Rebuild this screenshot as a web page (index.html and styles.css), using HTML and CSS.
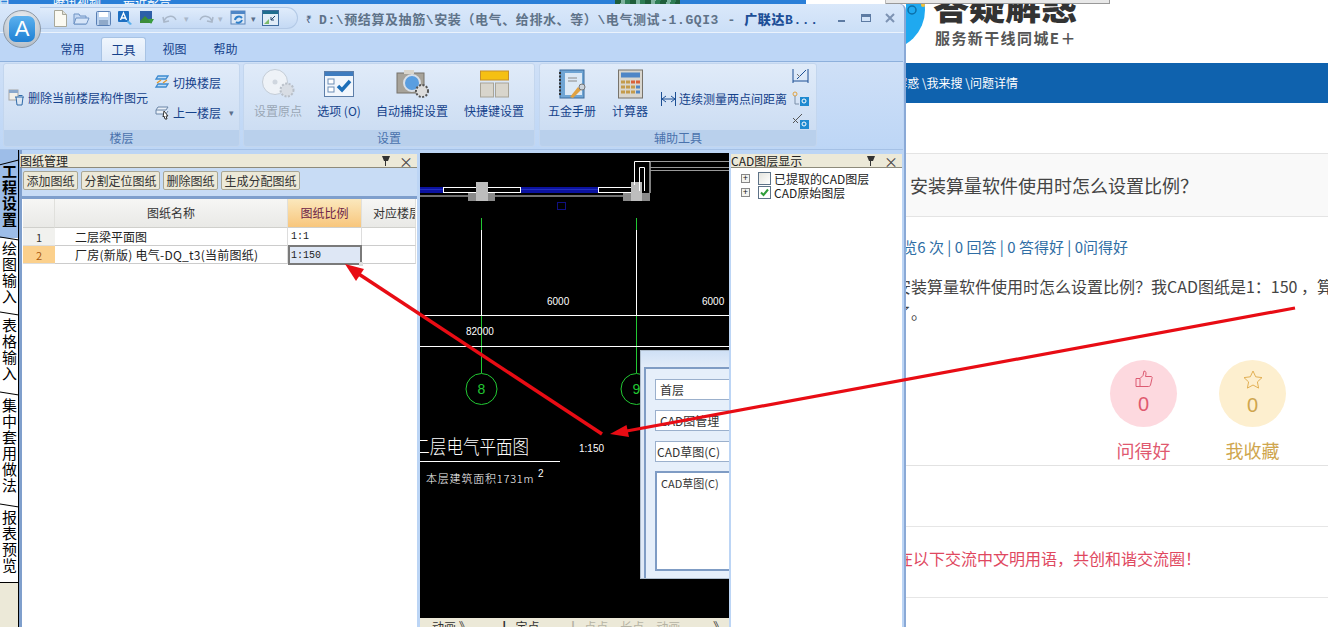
FILE: index.html
```html
<!DOCTYPE html>
<html lang="zh">
<head>
<meta charset="utf-8">
<title>安装算量软件使用时怎么设置比例</title>
<link rel="stylesheet" href="styles.css">
</head>
<body>
<div class="desk">

  <main class="web">
    <div class="topstrip">
      <div class="taskbar"><span class="tb1">计算</span><span class="tb2">腾讯视频</span><span class="tb3">最近影音</span><i class="plant"></i></div>
      <div class="topgap"></div>
      <div class="topgrey"></div>
    </div>
    <header class="logo">
      <svg class="logomark" width="24" height="50" viewBox="0 0 24 50"><circle cx="-21" cy="10" r="40" fill="#1fa9f0"/><circle cx="6" cy="10" r="4" fill="none" stroke="#0c6fa8" stroke-width="1.500"/><circle cx="17" cy="5" r="2" fill="#f1c13b"/></svg>
      <div class="logotext">
        <div class="logotitle">答疑解惑</div>
        <div class="logosub">服务新干线同城E＋</div>
      </div>
    </header>
    <nav class="crumbs"><span class="crumbtext">答疑解惑 \我来搜 \问题详情</span></nav>
    <div class="spacer50"></div>
    <h1 class="qtitle">安装算量软件使用时怎么设置比例？</h1>
    <div class="meta">浏览6 次 | 0 回答 | 0 答得好 | 0问得好</div>
    <div class="qbody">安装算量软件使用时怎么设置比例？我CAD图纸是1：150 ，算量时比例怎么设置，谢谢<br>了。</div>
    <div class="votes">
      <div class="vote vote-red">
        <div class="disc disc-red">
          <svg width="18" height="18" viewBox="0 0 18 18" fill="none" stroke="#dc5b72" stroke-width="1"><path d="M1 8.500h4v8H1zM5 8.500l3-3 1-4.500c2 0 2.500 2 1.500 5.500H16c1 0 1.500 1 1 2l-1.500 6.500c-.2.800-.8 1.500-1.800 1.500H5"/></svg>
          <span class="count">0</span>
        </div>
        <div class="votelabel">问得好</div>
      </div>
      <div class="vote vote-gold">
        <div class="disc disc-gold">
          <svg width="20" height="19" viewBox="0 0 20 19" fill="none" stroke="#e2b055" stroke-width="1"><path d="M10 1l2.700 5.800 6.300.8-4.600 4.300 1.200 6.200L10 15l-5.600 3.100 1.200-6.200L1 7.600l6.300-.8z"/></svg>
          <span class="count">0</span>
        </div>
        <div class="votelabel">我收藏</div>
      </div>
    </div>
    <div class="band61"></div>
    <div class="notice"><span class="noticetext">请在以下交流中文明用语，共创和谐交流圈！</span></div>
  </main>

  <section class="app">
    <div class="orb"><span class="orbcore">A</span></div>

    <div class="titlebar">
      <div class="qat">
        <svg width="14" height="17" viewBox="0 0 14 17"><path d="M1.500.5h8l4 4v12h-12z" fill="#fbfaf2" stroke="#a8a89a"/><path d="M9.500.5v4h4" fill="#e0e0d8" stroke="#a8a89a"/></svg>
        <svg width="17" height="15" viewBox="0 0 17 15"><path d="M1 13V3h5l1 2h6v8z" fill="#c4d8f3" stroke="#6f93c4"/><path d="M1 13l2-6h13l-2.500 6z" fill="#d6e5f8" stroke="#6f93c4"/></svg>
        <svg width="15" height="15" viewBox="0 0 15 15"><rect x=".5" y=".5" width="14" height="14" rx="1" fill="#bcd3ef" stroke="#587fb5"/><rect x="3" y="1" width="9" height="5" fill="#fff"/><rect x="3" y="9" width="9" height="5" fill="#8fa9c9"/></svg>
        <svg width="16" height="16" viewBox="0 0 16 16"><rect x="1" y="1" width="11" height="11" rx="1" fill="#1d6fc2"/><path d="M3.500 10L6.500 3l3 7M4.500 8h4" fill="none" stroke="#fff" stroke-width="1.300"/><path d="M11 10l4 4-2 1-3-3z" fill="#5ab0ec"/></svg>
        <svg width="16" height="16" viewBox="0 0 16 16"><rect x="1" y="1" width="12" height="12" fill="#2d5fa8"/><path d="M1 11l5-5 4 4 3-2v5H1z" fill="#3c8c3a"/><path d="M9 9h6l-3 5z" fill="#3a9d3f"/></svg>
        <svg class="dim" width="20" height="12" viewBox="0 0 20 12" fill="none" stroke="#a9b7c9" stroke-width="1.500"><path d="M3 10c1-6 9-8 12-2M2 5l1 5 5-1"/></svg>
        <span class="drop dimtext">▾</span>
        <svg class="dim" width="20" height="12" viewBox="0 0 20 12" fill="none" stroke="#a9b7c9" stroke-width="1.500"><path d="M17 10c-1-6-9-8-12-2M18 5l-1 5-5-1"/></svg>
        <span class="drop dimtext">▾</span>
        <svg width="19" height="17" viewBox="0 0 19 17"><rect x="2" y="1" width="14" height="13" fill="#dce8f6" stroke="#5d86bb"/><rect x="2" y="1" width="14" height="3" fill="#4f86c6"/><path d="M6 10a4 4 0 0 1 7-2M13 10a4 4 0 0 1-6 2" fill="none" stroke="#2f7fc9" stroke-width="2"/></svg>
        <span class="drop">▾</span>
        <svg width="17" height="16" viewBox="0 0 17 16"><rect x=".5" y=".5" width="16" height="15" fill="#e0ecf8" stroke="#3f6c9e"/><rect x="1" y="1" width="15" height="3" fill="#1f6d8e"/><path d="M2 14l5-5v5z" fill="#7ebb6b"/><path d="M13 6l-4 4M9 7v3h3" fill="none" stroke="#25466e"/></svg>
      </div>
      <span class="qatmenu">₹</span>
      <div class="doctitle">D:\预结算及抽筋\安装（电气、给排水、等）\电气测试-1.GQI3 - <b class="appname">广联达B...</b></div>
      <div class="winbtns">
        <svg width="10" height="10" viewBox="0 0 10 10"><rect x="1" y="7" width="7" height="2" fill="#5d7ba3"/></svg>
        <svg width="10" height="10" viewBox="0 0 10 10"><rect x=".5" y="1.500" width="9" height="7" fill="none" stroke="#5d7ba3"/><rect x="1" y="2" width="8" height="2" fill="#5d7ba3"/></svg>
        <svg width="10" height="10" viewBox="0 0 10 10"><path d="M1 1l8 8M9 1L1 9" stroke="#7d93b3" stroke-width="2"/></svg>
      </div>
    </div>

    <div class="tabs">
      <span class="tab">常用</span>
      <span class="tab tab-on">工具</span>
      <span class="tab">视图</span>
      <span class="tab">帮助</span>
    </div>

    <div class="ribbon">
      <div class="group g1">
        <div class="gbody">
          <div class="rowbtn wide">
            <svg width="17" height="17" viewBox="0 0 17 17"><rect x="1" y="1" width="9" height="10" fill="#f2f0ea" stroke="#a5a5a5"/><rect x="1" y="1" width="9" height="3" fill="#8aa8cc"/><path d="M7 8h9M8 8l1 8h5l1-8M10.500 6.500h4" fill="#dce6f2" stroke="#2f6aa8"/></svg>
            <span>删除当前楼层构件图元</span>
          </div>
          <div class="stack">
            <div class="rowbtn">
              <svg width="16" height="16" viewBox="0 0 16 16" fill="none" stroke="#3d8ad0" stroke-width="1.300"><path d="M4 2h10l-2 3H2zM4 10h10l-2 3H2z" fill="#bfdcf5"/><path d="M13 6L9 9M3 9l4-3" stroke="#e29a2e"/></svg>
              <span>切换楼层</span>
            </div>
            <div class="rowbtn">
              <svg width="16" height="16" viewBox="0 0 16 16" fill="none" stroke="#6b85a6"><path d="M4 3h10l-2 3H2zM2 6v4h10l2-3" fill="#e8eff8"/><path d="M10 7l4 5-2 0 1 3-2 0-1-3-1 1z" fill="#fff" stroke="#333"/></svg>
              <span>上一楼层</span><span class="drop pad">▾</span>
            </div>
          </div>
        </div>
        <div class="glabel">楼层</div>
      </div>

      <div class="group g2">
        <div class="gbody gbig">
          <div class="big b-origin">
            <svg width="36" height="30" viewBox="0 0 36 30"><circle cx="15" cy="13" r="12.500" fill="#eef2f7" stroke="#c3ccd6"/><circle cx="15" cy="13" r="2.500" fill="#cfd6df"/><circle cx="27" cy="21" r="6.500" fill="#d8dde4" stroke="#b8bfc8" stroke-width="2" stroke-dasharray="2 1.500"/></svg>
            <span class="off">设置原点</span>
          </div>
          <div class="big b-opt">
            <svg width="30" height="26" viewBox="0 0 30 26"><rect x=".5" y=".5" width="29" height="25" fill="#f1f6fc" stroke="#5d7ea8"/><rect x="1" y="1" width="28" height="4" fill="#3f7cbf"/><rect x="4" y="8" width="6" height="5" fill="#fff" stroke="#6d8db5"/><rect x="4" y="16" width="6" height="5" fill="#fff" stroke="#6d8db5"/><path d="M14 15l4 4 8-9" fill="none" stroke="#1e6fb8" stroke-width="3.500"/></svg>
            <span>选项 (O)</span>
          </div>
          <div class="big b-snap">
            <svg width="33" height="30" viewBox="0 0 33 30"><rect x="1" y="4" width="27" height="20" fill="#a7a39a" stroke="#77736b"/><rect x="8" y="1" width="10" height="4" fill="#d9d5cc"/><circle cx="16" cy="14" r="8" fill="#5a9ee0" stroke="#d8dfe8" stroke-width="2"/><circle cx="26" cy="22" r="6" fill="#ddd" stroke="#555" stroke-width="2" stroke-dasharray="2 1.500"/></svg>
            <span>自动捕捉设置</span>
          </div>
          <div class="big b-key">
            <svg width="29" height="27" viewBox="0 0 29 27"><rect x=".5" y=".5" width="28" height="9" fill="#f5c013" stroke="#c7902a"/><rect x=".5" y="12.500" width="13" height="14" fill="#d8d5cc" stroke="#a8a498"/><rect x="15.500" y="12.500" width="13" height="14" fill="#d8d5cc" stroke="#a8a498"/></svg>
            <span>快捷键设置</span>
          </div>
        </div>
        <div class="glabel">设置</div>
      </div>

      <div class="group g3">
        <div class="gbody gbig">
          <div class="big b-hand">
            <svg width="30" height="30" viewBox="0 0 30 30"><rect x="3" y="1" width="24" height="28" fill="#6fa5d4" stroke="#3c6d9e"/><rect x="8" y="4" width="17" height="22" fill="#dbe9f6"/><path d="M3 3v24" stroke="#333" stroke-width="2" stroke-dasharray="2 1.500"/><path d="M11 9h9M11 12h9" stroke="#888"/><path d="M13 28l8-10 3 3-8 8z" fill="#e0a241"/><circle cx="25" cy="18" r="3" fill="#ccd4dc" stroke="#777"/></svg>
            <span>五金手册</span>
          </div>
          <div class="big b-calc">
            <svg width="25" height="29" viewBox="0 0 25 29"><rect x=".5" y=".5" width="24" height="28" fill="#d9d6cf" stroke="#77736b"/><rect x="3" y="3" width="19" height="5" fill="#4f86c6"/><g fill="#c49b4c"><rect x="3" y="11" width="4" height="3"/><rect x="8" y="11" width="4" height="3"/><rect x="13" y="11" width="4" height="3" fill="#d9613a"/><rect x="18" y="11" width="4" height="3" fill="#d9613a"/><rect x="3" y="16" width="4" height="3"/><rect x="8" y="16" width="4" height="3"/><rect x="13" y="16" width="4" height="3"/><rect x="18" y="16" width="4" height="3" fill="#4f86c6"/><rect x="3" y="21" width="4" height="3"/><rect x="8" y="21" width="4" height="3"/><rect x="13" y="21" width="4" height="3"/><rect x="18" y="21" width="4" height="3" fill="#4f86c6"/></g></svg>
            <span>计算器</span>
          </div>
          <div class="rowbtn measure">
            <svg width="17" height="16" viewBox="0 0 17 16" fill="none" stroke="#1c4f94"><path d="M1.500 1v14M15.500 1v14M2 8h13M2 8l4-3M2 8l4 3M15 8l-4-3M15 8l-4 3"/></svg>
            <span>连续测量两点间距离</span>
          </div>
          <div class="minis">
            <svg width="17" height="17" viewBox="0 0 17 17" fill="none" stroke="#1c4f94"><path d="M1 2v14M16 2v14M1 14h15M5 12l9-9" /><path d="M5 7l3 3" stroke="#777"/></svg>
            <svg width="17" height="17" viewBox="0 0 17 17" fill="none"><circle cx="3" cy="4" r="2" stroke="#e0a241"/><path d="M3 6v8h4" stroke="#7a8fa8"/><rect x="8" y="7" width="9" height="9" fill="#1f8ad0"/><circle cx="12" cy="11" r="2" stroke="#fff"/></svg>
            <svg width="17" height="17" viewBox="0 0 17 17" fill="none"><path d="M1 10l9-9M1 5l5 5" stroke="#555"/><rect x="8" y="7" width="9" height="9" fill="#1f8ad0"/><circle cx="12" cy="11" r="2" stroke="#fff"/></svg>
          </div>
        </div>
        <div class="glabel">辅助工具</div>
      </div>
    </div>

    <div class="dock">
      <div class="sidetabs">
        <div class="stab stab-on">工程设置</div>
        <div class="stab st2">绘图输入</div>
        <div class="stab st3">表格输入</div>
        <div class="stab st4">集中套用做法</div>
        <div class="stab st5">报表预览</div>
        <div class="sidefill"></div>
      </div>

      <div class="panel drawings">
        <div class="ptitle"><span>图纸管理</span><span class="pctl"><i class="pin"></i><i class="close">×</i></span></div>
        <div class="toolbar">
          <button class="tbtn">添加图纸</button>
          <button class="tbtn">分割定位图纸</button>
          <button class="tbtn">删除图纸</button>
          <button class="tbtn">生成分配图纸</button>
        </div>
        <div class="sheet">
          <div class="hd corner"></div>
          <div class="hd">图纸名称</div>
          <div class="hd hd-on">图纸比例</div>
          <div class="hd hd-cut">对应楼层</div>

          <div class="num">1</div>
          <div class="cell name">二层梁平面图</div>
          <div class="cell mono">1:1</div>
          <div class="cell"></div>

          <div class="num num-on">2</div>
          <div class="cell name namewide">厂房(新版) 电气-DQ_t3(当前图纸)</div>
          <div class="cell mono cell-on">1:150</div>
          <div class="cell"></div>
        </div>
      </div>

      <div class="cadwrap">
        <div class="cad">
          <svg class="drawing" width="309" height="465" viewBox="0 0 309 465">
            <rect x="0" y="34" width="23" height="6" fill="#0b12a0"/>
            <rect x="101" y="34" width="77" height="6" fill="#0b12a0"/>
            <path d="M0 36.500h23M101 36.500h77" stroke="#2430c0"/>
            <rect x="23.500" y="34.500" width="77" height="5" fill="#000" stroke="#fff"/>
            <rect x="178.500" y="34.500" width="33" height="5" fill="#000" stroke="#fff"/>
            <path d="M0 43h48M75 43h128" stroke="#ddd"/>
            <rect x="48" y="40" width="27" height="8" fill="#8a8a8a"/>
            <rect x="56" y="29" width="12" height="19" fill="#bdbdbd"/>
            <rect x="203" y="40" width="27" height="8" fill="#8a8a8a"/>
            <rect x="211" y="29" width="11" height="19" fill="#bdbdbd"/>
            <path d="M214.500 32V8.500H230M230 8.500V40" fill="none" stroke="#fff"/>
            <path d="M219.500 38V14.500h5V38" fill="none" stroke="#fff"/>
            <path d="M230 8.500h79M230 14.500h79M230 17.500h79" stroke="#999"/>
            <rect x="137.500" y="49.500" width="8" height="7" fill="none" stroke="#101080"/>
            <path d="M61.500 65v12M216.500 65v12M61.500 162v58M216.500 162v58" stroke="#22c833"/>
            <path d="M61.500 77v85M216.500 77v85" stroke="#fff"/>
            <path d="M0 162.500h309M0 193.500h309" stroke="#fff"/>
            <text class="dim6" x="127" y="152">6000</text>
            <text class="dim6" x="282" y="152">6000</text>
            <text class="dim6" x="46" y="182">82000</text>
            <circle cx="61.500" cy="236" r="15.500" fill="none" stroke="#22c833"/>
            <text class="axis" x="61.500" y="241">8</text>
            <circle cx="216.500" cy="236" r="15.500" fill="none" stroke="#22c833"/>
            <text class="axis" x="216.500" y="241">9</text>
            <text class="cadtitle" transform="translate(109 301) scale(.87 1)" text-anchor="end">二层电气平面图</text>
            <path d="M0 308.500h140" stroke="#fff"/>
            <text class="cadnote" x="6" y="330">本层建筑面积1731m</text>
            <text class="dim6" x="118" y="324">2</text>
            <text class="dim6" x="159" y="299">1:150</text>
          </svg>
          <div class="dlg">
            <div class="dlgtitle"></div>
            <div class="dlgbody">
              <div class="field">首层</div>
              <div class="field">CAD图管理</div>
              <div class="field small">CAD草图(C)</div>
              <div class="listbox">CAD草图(C)</div>
            </div>
          </div>
        </div>
        <div class="cadtabs"><span>动画 》</span><span>▏定点</span><span class="fade">▏点点　长点　动画</span><span>》</span></div>
      </div>

      <div class="panel layers">
        <div class="ptitle"><span>CAD图层显示</span><span class="pctl"><i class="pin"></i><i class="close">×</i></span></div>
        <div class="tree">
          <div class="node"><i class="exp">+</i><i class="chk"></i><span>已提取的CAD图层</span></div>
          <div class="node"><i class="exp">+</i><i class="chk chk-on"><svg width="11" height="11" viewBox="0 0 11 11"><path d="M2 5.500l2.500 2.500L9 2.500" fill="none" stroke="#2f9e3a" stroke-width="2"/></svg></i><span>CAD原始图层</span></div>
        </div>
      </div>
    </div>
  </section>

  <svg class="arrows" width="1328" height="627" viewBox="0 0 1328 627">
    <path d="M1295 308L624 431.500" stroke="#e80c14" stroke-width="3.200"/>
    <polygon points="610,434 629,437 626.500,425" fill="#e80c14"/>
    <path d="M602 434L358 273.500" stroke="#e80c14" stroke-width="3.500"/>
    <polygon points="345,264 356,281 364,269" fill="#e80c14"/>
  </svg>
</div>
</body>
</html>
```

FILE: styles.css
```css
* { box-sizing: border-box; }
html, body { margin: 0; padding: 0; height: 100%; overflow: hidden; background: #fff; }
body { font-family: "Noto Sans CJK SC", "Liberation Sans", sans-serif; }
.desk { position: relative; width: 1328px; height: 627px; overflow: hidden; }

/* ---------- web page behind ---------- */
.web { position: absolute; left: 0; top: 0; width: 1328px; height: 627px; background: #fff; color: #444; }
.topstrip { position: relative; z-index: 1; display: flex; height: 4px; overflow: hidden; }
.taskbar { position: relative; width: 806px; background: #2a7fd8; color: #fff; font-size: 12px; line-height: 4px; display: flex; }
.tb1 { margin-left: -14px; width: 67px; }
.tb2 { width: 70px; }
.tb3 { width: 60px; }
.plant { position: absolute; left: 615px; top: 0; width: 65px; height: 4px; background: repeating-linear-gradient(100deg, #1f5e3a 0 6px, #7fb4a0 6px 10px, #2e7d54 10px 15px); }
.topgap { width: 80px; background: #fff; border-right: 1px solid #bbb; }
.topgrey { width: 224px; background: #e8e8e8; border-right: 1px solid #999; border-bottom: 1px solid #999; }

.logo { display: flex; height: 59px; padding-left: 906px; overflow: hidden; }
.logomark { flex: none; margin-right: 3px; margin-top: -4px; }
.logotext { display: flex; flex-direction: column; }
.logotitle { flex: none; height: 40px; margin-top: -20px; font-size: 36px; line-height: 40px; font-weight: 900; color: #333; white-space: nowrap; }
.logosub { flex: none; margin-top: 4px; margin-left: 2px; font-size: 15px; line-height: 20px; font-weight: 700; color: #555; letter-spacing: 1.400px; white-space: nowrap; }

.crumbs { height: 40px; background: #0f62ae; color: #fff; }
.crumbtext { display: block; width: 1018px; text-align: right; font-size: 12px; line-height: 40px; }
.spacer50 { height: 50px; }

.qtitle { margin: 0; height: 64px; padding-left: 910px; background: #f9f9f9; border-top: 1px solid #e4e4e4; border-bottom: 1px solid #e4e4e4; font-size: 18px; font-weight: 400; line-height: 62px; color: #444; white-space: nowrap; }
.meta { height: 50px; width: 1128px; text-align: right; font-size: 15px; line-height: 60px; color: #2f6ea5; white-space: nowrap; }
.qbody { height: 62px; padding-left: 895px; width: 1500px; font-size: 16px; line-height: 26px; color: #444; white-space: nowrap; padding-top: 6px; }
.votes { display: flex; gap: 42px; height: 136px; padding: 31px 0 0 1110px; }
.vote { display: flex; flex-direction: column; align-items: center; width: 67px; }
.vote-red { color: #e0596f; }
.vote-gold { color: #cfa64e; }
.disc { flex: none; display: flex; flex-direction: column; align-items: center; width: 67px; height: 67px; border-radius: 50%; padding-top: 10px; }
.disc-red { background: #fdd9df; }
.disc-gold { background: #fdefcf; }
.count { font-family: "Liberation Sans", sans-serif; font-size: 20px; line-height: 24px; margin-top: 4px; }
.votelabel { font-size: 18px; line-height: 26px; margin-top: 10px; white-space: nowrap; }
.band61 { height: 61px; border-top: 1px solid #e2e2e2; }
.notice { height: 72px; border-top: 1px solid #e6e6e6; border-bottom: 1px solid #e6e6e6; color: #e0485f; }
.noticetext { display: block; width: 1201px; text-align: right; font-size: 16px; line-height: 62px; white-space: nowrap; }

/* ---------- application window ---------- */
.app { position: absolute; z-index: 2; left: 0; top: 4px; width: 906px; height: 623px; display: flex; flex-direction: column; background: #bcd5f5; border-right: 2px solid #8aa9d6; border-top-right-radius: 6px; color: #15428b; font-size: 12px; overflow: hidden; box-shadow: inset 0 1px 0 #5f7ea8; }
.orb { position: absolute; left: 3px; top: 6px; width: 38px; height: 38px; border-radius: 50%; background: radial-gradient(circle at 50% 30%, #f4f6f8, #a9b2bc); border: 1px solid #8c98a5; display: flex; align-items: center; justify-content: center; z-index: 2; }
.orbcore { display: block; width: 26px; height: 26px; border-radius: 7px; background: linear-gradient(#5cb1ee, #1f80d4); color: #fff; font-family: "Liberation Sans", sans-serif; font-size: 22px; line-height: 26px; text-align: center; }

.titlebar { flex: none; display: flex; align-items: center; height: 29px; padding-left: 40px; background: linear-gradient(#dae8fa, #cbdff7); border-bottom: 1px solid #eaf2fc; }
.qat { display: flex; align-items: center; gap: 6px; width: 258px; height: 22px; padding-left: 13px; border: 1px solid #b3c9e6; border-left: 0; border-radius: 0 11px 11px 0; background: linear-gradient(#e0ecfb, #c4d9f4); }
.drop { font-size: 9px; color: #5b6f8a; line-height: 1; margin-left: -3px; }
.drop.pad { margin-left: 5px; }
.dimtext { color: #a9b7c9; }
.qatmenu { width: 21px; text-align: center; font-size: 10px; color: #3f5676; }
.doctitle { flex: none; width: 500px; font-family: "Liberation Mono", "Noto Sans CJK SC", monospace; font-size: 13px; font-weight: 700; letter-spacing: .6px; color: #5f7389; white-space: nowrap; overflow: hidden; }
.appname { color: #1d4f97; }
.winbtns { display: flex; gap: 14px; margin-left: 18px; }

.tabs { flex: none; display: flex; align-items: flex-end; gap: 6px; height: 28px; padding-left: 50px; background: #bdd6f6; }
.tab { width: 45px; height: 24px; text-align: center; line-height: 24px; color: #15428b; }
.tab-on { background: linear-gradient(#f0f6fd, #dbe8f8); border: 1px solid #a8c3e4; border-bottom: 0; border-radius: 3px 3px 0 0; }

.ribbon { flex: none; display: flex; height: 89px; padding: 1px 3px 2px; gap: 3px; background: linear-gradient(#cfe0f7, #bdd6f6); border-top: 1px solid #8db0dc; border-bottom: 1px solid #a5c1e6; width: 903px; }
.group { display: flex; flex-direction: column; border-radius: 3px; background: linear-gradient(#e0ebf9, #c8daf1); border: 1px solid #c3d6ee; overflow: hidden; }
.g1 { width: 237px; }
.g2 { width: 292px; }
.g3 { width: 278px; margin-left: 1px; }
.gbody { flex: 1; display: flex; align-items: center; min-height: 0; }
.gbig { align-items: flex-start; padding-top: 5px; }
.glabel { flex: none; height: 16px; text-align: center; line-height: 16px; background: #b9d0ec; color: #4a72ac; }
.rowbtn { display: flex; align-items: center; gap: 3px; white-space: nowrap; }
.wide { margin-left: 4px; width: 146px; gap: 3px; }
.stack { display: flex; flex-direction: column; gap: 13px; }
.big { display: flex; flex-direction: column; align-items: center; white-space: nowrap; }
.big svg { height: 30px; flex: none; }
.big span { margin-top: 3px; line-height: 17px; }
.big .off { color: #9aa7b6; }
.b-origin { margin-left: 10px; }
.b-opt { margin-left: 17px; width: 40px; }
.b-snap { margin-left: 17px; }
.b-key { margin-left: 16px; }
.b-hand { margin-left: 8px; }
.b-calc { margin-left: 16px; }
.measure { margin-left: 12px; margin-top: 21px; gap: 2px; }
.minis { display: flex; flex-direction: column; gap: 6px; margin-left: 5px; margin-top: -2px; }

.dock { flex: 1; display: flex; min-height: 0; width: 904px; }
.sidetabs { flex: none; width: 19px; display: flex; flex-direction: column; border-right: 1px solid #000; background: #fff; color: #000; }
.stab { position: relative; flex: none; writing-mode: vertical-rl; text-orientation: upright; font-size: 15px; line-height: 18px; letter-spacing: 1px; padding-top: 3px; background: #fff; white-space: nowrap; }
.stab::before { content: ""; position: absolute; left: -1px; top: 0; width: 20px; height: 1px; background: #000; transform: rotate(9deg); }
.stab-on { height: 88px; padding-top: 14px; background: #9dbde8; font-weight: 700; }
.stab-on::before { top: 12px; transform: rotate(-14deg); }
.st2 { height: 75px; }
.st3 { height: 80px; padding-top: 5px; }
.st4 { height: 112px; padding-top: 5px; }
.st5 { height: 77px; padding-top: 5px; }
.sidefill { flex: 1; background: #ece9d8; border-top: 1px solid #000; }

.panel { display: flex; flex-direction: column; background: #fff; padding-top: 4px; }
.drawings { flex: none; width: 398px; border-left: 3px solid #7f9fcc; background: linear-gradient(#bcd5f5 4px, #fff 4px); }
.drawings .ptitle { margin-left: -2px; }
.layers { flex: none; width: 171px; background: linear-gradient(#bcd5f5 4px, #fff 4px); }
.ptitle { flex: none; display: flex; justify-content: space-between; align-items: center; height: 14px; background: #ece9d8; border-bottom: 1px solid #8d8a7a; color: #222; font-size: 12px; line-height: 13px; white-space: nowrap; }
.pctl { display: flex; align-items: center; gap: 9px; padding-right: 4px; }
.pin { display: block; width: 8px; height: 9px; border-top: 5px solid #333; border-left: 2px solid transparent; border-right: 2px solid transparent; position: relative; }
.pin::after { content: ""; position: absolute; left: 1px; top: 0; width: 1px; height: 5px; background: #333; }
.close { font-style: normal; font-size: 14px; line-height: 12px; color: #444; }

.toolbar { flex: none; display: flex; gap: 3px; height: 31px; padding: 3px 0 0 1px; background: #c8dcf5; border-bottom: 3px solid #7f9fcc; align-items: flex-start; }
.tbtn { height: 19px; padding: 0 2.500px; font-family: "Noto Sans CJK SC", sans-serif; font-size: 12px; line-height: 16px; color: #333; background: #ece9d8; border: 1px solid #a9a795; border-radius: 2px; white-space: nowrap; }
.sheet { display: grid; grid-template-columns: 32px 233px 74px 54px; grid-template-rows: 29px 18px 18px; margin-left: 1px; color: #222; }
.hd { display: flex; align-items: center; justify-content: center; padding-bottom: 2px; background: linear-gradient(#f6f6f4, #e9e9e6); border-right: 1px solid #e0e0dc; border-bottom: 1px solid #d0d0cc; color: #333; white-space: nowrap; overflow: hidden; }
.hd-on { background: linear-gradient(#fbe8bd, #f8c67c); color: #6c2348; }
.hd-cut { justify-content: flex-start; padding-left: 11px; }
.num { display: flex; align-items: center; justify-content: center; background: #f1f1ee; border-bottom: 1px solid #ddd; font-size: 11px; color: #333; }
.num-on { background: #fbd08c; color: #a8570c; }
.cell { display: flex; align-items: center; border-right: 1px solid #ddd; border-bottom: 1px solid #ccc; padding-left: 3px; white-space: nowrap; overflow: hidden; }
.name { padding-left: 20px; }
.namewide { letter-spacing: .25px; }
.mono { font-family: "Liberation Mono", monospace; font-size: 10px; }
.cell-on { position: relative; overflow: visible; border: 2px solid #7a7a7a; background: #dee7f5; height: 20px; margin-top: -1px; padding-left: 1px; }
.cell-on::after { content: ""; position: absolute; right: -3px; bottom: -3px; width: 4px; height: 4px; background: #ddd; }

.cadwrap { flex: none; width: 309px; margin-left: 3px; margin-right: 2px; display: flex; flex-direction: column; padding-top: 3px; background: #bcd5f5; }
.cad { position: relative; flex: none; height: 465px; background: #000; overflow: hidden; }
.drawing { display: block; }
.dim6 { font-family: "Liberation Sans", sans-serif; font-size: 10px; fill: #fff; }
.axis { font-family: "Liberation Sans", sans-serif; font-size: 14px; fill: #22c833; text-anchor: middle; }
.cadtitle { font-family: "Noto Sans CJK SC", sans-serif; font-size: 19px; font-weight: 300; fill: #fff; }
.cadnote { font-family: "Noto Sans CJK SC", sans-serif; font-size: 11px; font-weight: 300; letter-spacing: .8px; fill: #fff; }
.dlg { position: absolute; left: 220px; top: 197px; width: 200px; height: 229px; background: #dfe9f7; border: 1px solid #aebccb; }
.dlgtitle { height: 16px; background: linear-gradient(#cfe0f5, #e2ecf9); }
.dlgbody { display: flex; flex-direction: column; gap: 10px; height: 211px; margin-left: 3px; padding: 10px 0 0 9px; border-left: 2px solid #7f9cc4; border-top: 2px solid #7f9cc4; background: #e6effa; color: #333; }
.field { flex: none; height: 21px; background: #fff; border: 1px solid #9bb0cc; padding-left: 4px; line-height: 19px; font-size: 12px; white-space: nowrap; }
.small { padding-left: 1px; }
.listbox { flex: none; height: 100px; background: #fff; border: 2px solid #7f9cc4; padding: 0 0 0 4px; font-size: 11px; line-height: 20px; margin-top: -1px; }
.cadtabs { flex: 1; display: flex; justify-content: space-between; gap: 8px; padding: 0 4px 0 12px; background: #ece9d8; color: #333; font-size: 12px; line-height: 18px; overflow: hidden; white-space: nowrap; }
.fade { color: #b5b3a4; }

.tree { padding: 3px 0 0 10px; color: #222; }
.node { display: flex; align-items: center; height: 14px; font-size: 12px; white-space: nowrap; }
.exp { flex: none; display: block; width: 9px; height: 9px; margin-right: 8px; border: 1px solid #888; background: #f4f4f0; font-style: normal; font-size: 9px; line-height: 7px; text-align: center; color: #222; font-family: "Liberation Sans", sans-serif; }
.chk { flex: none; display: flex; align-items: center; justify-content: center; width: 13px; height: 13px; margin-right: 3px; border: 1px solid #5d7287; background: linear-gradient(135deg, #e4e4de, #fff); }
.chk-on { background: #fff; }

.arrows { position: absolute; z-index: 3; left: 0; top: 0; pointer-events: none; }
```
